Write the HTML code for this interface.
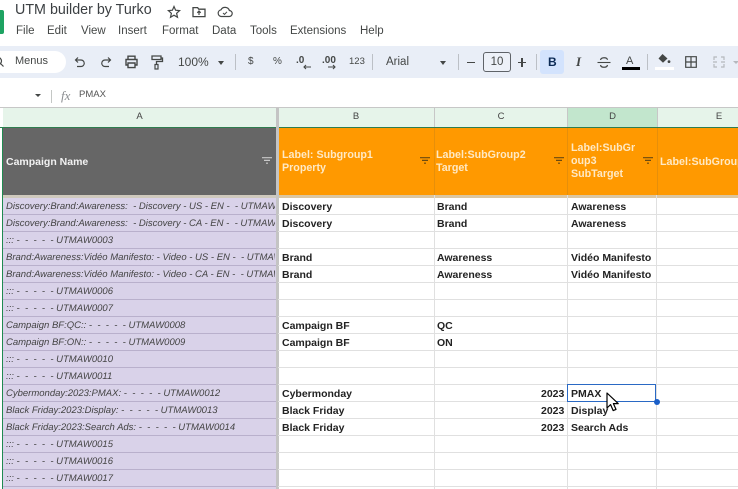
<!DOCTYPE html>
<html><head><meta charset="utf-8"><style>
html,body{margin:0;padding:0;width:738px;height:489px;overflow:hidden;background:#fff;font-family:"Liberation Sans",sans-serif}
#p{position:relative;width:738px;height:489px;overflow:hidden;background:#fff}
#p div{position:absolute;white-space:nowrap}
.m{top:24px;font-size:11.5px;line-height:15px;color:#444746}
.tb{font-size:11px;color:#444746;line-height:14px}
.sep{width:1px;background:#bcc0c6;top:54px;height:16px}
.h{top:108px;height:19px;line-height:17px;font-size:9.5px;color:#444;text-align:center;background:#e6f4ea}
.a{left:6px;width:269px;overflow:hidden;font-style:italic;font-size:9.5px;line-height:16px;height:16px;color:#444;margin-top:1px;text-rendering:geometricPrecision}
.b{font-weight:bold;font-size:10.5px;line-height:16px;height:16px;color:#222}
.l{height:1px;background:#e0e0e0;left:278px;width:460px}
.pl{height:1px;background:#b9b0cc;left:3px;width:273px}
.v{width:1px;background:#e0e0e0;top:195px;height:294px}
.hd{font-weight:bold;font-size:10.7px;line-height:13px;color:#ffe9c4;white-space:normal}
svg{position:absolute;overflow:visible}
</style></head><body><div id="p">

<div style="left:-6px;top:10px;width:10px;height:24px;background:#1ea362;border-radius:2px"></div>
<div style="left:15px;top:0;font-size:14.3px;line-height:20px;color:#3c4043">UTM builder by Turko</div>
<svg style="left:167px;top:5px" width="14" height="14" viewBox="0 0 14 14"><path d="M7 1.5l1.6 3.7 4 .4-3 2.7.9 4L7 10.2l-3.5 2.1.9-4-3-2.7 4-.4z" fill="none" stroke="#444746" stroke-width="1.2"/></svg>
<svg style="left:192px;top:6px" width="14" height="12" viewBox="0 0 14 12"><path d="M1 2.2V10.6H13V3.2H6.8L5.6 1.6H1z" fill="none" stroke="#444746" stroke-width="1.3"/><path d="M7 9V5.2M5.3 6.8L7 5l1.7 1.8" fill="none" stroke="#444746" stroke-width="1.2"/></svg>
<svg style="left:217px;top:6px" width="16" height="12" viewBox="0 0 16 12"><path d="M4 10.5H12a3 3 0 0 0 .4-6A4.6 4.6 0 0 0 4 3.8a3.4 3.4 0 0 0 0 6.7z" fill="none" stroke="#444746" stroke-width="1.2"/><path d="M6 7l1.5 1.4L10 5.8" fill="none" stroke="#444746" stroke-width="1"/></svg>

<div class="m" style="left:16px">File</div>
<div class="m" style="left:47px">Edit</div>
<div class="m" style="left:81px">View</div>
<div class="m" style="left:118px">Insert</div>
<div class="m" style="left:162px">Format</div>
<div class="m" style="left:212px">Data</div>
<div class="m" style="left:250px">Tools</div>
<div class="m" style="left:290px">Extensions</div>
<div class="m" style="left:360px">Help</div>

<div style="left:0;top:46px;width:738px;height:32px;background:#e9eef7"></div>
<div style="left:-20px;top:51px;width:86px;height:22px;background:#fff;border-radius:11px"></div>
<svg style="left:-3px;top:56px" width="9" height="12" viewBox="0 0 9 12"><circle cx="1" cy="5" r="3.5" fill="none" stroke="#444746" stroke-width="1.2"/><path d="M3.5 7.5L6.5 10.5" stroke="#444746" stroke-width="1.2"/></svg>
<div class="tb" style="left:15px;top:54px">Menus</div>
<svg style="left:74px;top:56px" width="12" height="12" viewBox="0 0 12 12"><path d="M4 1.5L1.5 4 4 6.5M1.5 4H7a3.2 3.2 0 0 1 0 6.5H3" fill="none" stroke="#444746" stroke-width="1.2"/></svg>
<svg style="left:100px;top:56px" width="12" height="12" viewBox="0 0 12 12"><path d="M8 1.5L10.5 4 8 6.5M10.5 4H5a3.2 3.2 0 0 0 0 6.5H9" fill="none" stroke="#444746" stroke-width="1.2"/></svg>
<svg style="left:125px;top:55px" width="13" height="14" viewBox="0 0 13 14"><path d="M3 4V1.2H10V4M3 10H1V4.5H12V10H10M3 8H10V12.6H3z" fill="none" stroke="#444746" stroke-width="1.4"/></svg>
<svg style="left:151px;top:55px" width="12" height="15" viewBox="0 0 12 15"><path d="M1 1H10V4.5H1zM10 3H11.5V6.5H5.5V9.5" fill="none" stroke="#444746" stroke-width="1.3"/><rect x="4" y="9.5" width="3" height="4.5" fill="none" stroke="#444746" stroke-width="1.2"/></svg>
<div style="left:178px;top:55px;font-size:12px;line-height:15px;color:#444746">100%</div>
<div style="left:218px;top:61px;width:0;height:0;border:3.5px solid transparent;border-top:4px solid #444746;border-bottom:0"></div>
<div class="sep" style="left:235px"></div>
<div class="tb" style="left:248px;top:55px;font-size:10px">$</div>
<div class="tb" style="left:273px;top:55px;font-size:10px">%</div>
<div style="left:296px;top:54px;font-size:10px;font-weight:bold;color:#444746;line-height:13px">.0</div>
<svg style="left:302px;top:64px" width="10" height="6" viewBox="0 0 10 6"><path d="M9 3H2M4 1L2 3l2 2" fill="none" stroke="#444746" stroke-width="1.1"/></svg>
<div style="left:322px;top:54px;font-size:10px;font-weight:bold;color:#444746;line-height:13px">.00</div>
<svg style="left:327px;top:64px" width="10" height="6" viewBox="0 0 10 6"><path d="M1 3H8M6 1l2 2-2 2" fill="none" stroke="#444746" stroke-width="1.1"/></svg>
<div class="tb" style="left:349px;top:55px;font-size:9.5px">123</div>
<div class="sep" style="left:372px"></div>
<div class="tb" style="left:386px;top:55px;font-size:11.5px">Arial</div>
<div style="left:440px;top:61px;width:0;height:0;border:3.5px solid transparent;border-top:4px solid #444746;border-bottom:0"></div>
<div class="sep" style="left:458px"></div>
<div style="left:467px;top:62px;width:8px;height:1.4px;background:#444746"></div>
<div style="left:483px;top:52px;width:26px;height:18px;border:1px solid #5f6368;border-radius:3px;background:#edf1f8;text-align:center;font-size:11.5px;line-height:18px;color:#444746">10</div>
<div style="left:518px;top:62px;width:8px;height:1.4px;background:#444746"></div>
<div style="left:521.4px;top:58px;width:1.4px;height:9px;background:#444746"></div>
<div class="sep" style="left:536px"></div>
<div style="left:540px;top:50px;width:24px;height:24px;background:#d3e3fd;border-radius:3px"></div>
<div style="left:548px;top:55px;font-size:12px;font-weight:bold;line-height:14px;color:#0b2a55">B</div>
<div style="left:576px;top:54px;font-size:13px;font-style:italic;font-weight:bold;font-family:'Liberation Serif',serif;line-height:15px;color:#444746">I</div>
<svg style="left:597px;top:56px" width="14" height="13" viewBox="0 0 14 13"><path d="M0.5 6.5H13.5" stroke="#444746" stroke-width="1.1"/><path d="M3.5 4C4 1 10 1 10.5 3.8M3.5 9C4 12 10 12 10.5 9" fill="none" stroke="#444746" stroke-width="1.2"/></svg>
<div style="left:626px;top:55px;font-size:11px;line-height:12px;color:#444746">A</div>
<div style="left:622px;top:67px;width:18px;height:3px;background:#000"></div>
<div class="sep" style="left:647px"></div>
<svg style="left:657px;top:53px" width="14" height="12" viewBox="0 0 14 12"><path d="M5.5 1L10.5 5.5 6 9.8 1.5 5.5z" fill="#444746"/><circle cx="12" cy="8.6" r="1.4" fill="#444746"/></svg>
<div style="left:655px;top:67px;width:19px;height:3px;background:#fff"></div>
<svg style="left:685px;top:56px" width="12" height="12" viewBox="0 0 12 12"><path d="M.7.7H11.3V11.3H.7zM6 .7V11.3M.7 6H11.3" fill="none" stroke="#444746" stroke-width="1.2"/></svg>
<svg style="left:713px;top:56px" width="12" height="12" viewBox="0 0 12 12"><path d="M1 4V1H4M8 1H11V4M1 8V11H4M8 11H11V8M0 6H4M8 6H12" fill="none" stroke="#b5b8bd" stroke-width="1.2"/></svg>
<div style="left:733px;top:61px;width:0;height:0;border:3px solid transparent;border-top:3.5px solid #b5b8bd;border-bottom:0"></div>

<div style="left:35px;top:94px;width:0;height:0;border:3.5px solid transparent;border-top:3.5px solid #444746;border-bottom:0"></div>
<div style="left:51px;top:90px;width:1px;height:13px;background:#c4c7c5"></div>
<div style="left:61px;top:88px;font-family:'Liberation Serif',serif;font-style:italic;font-size:13px;line-height:16px;color:#8a8d90">fx</div>
<div style="left:79px;top:88px;font-size:9.5px;line-height:13px;color:#555">PMAX</div>

<div style="left:0;top:107px;width:738px;height:1px;background:#c7c7c7"></div>
<div class="h" style="left:3px;width:273px">A</div>
<div class="h" style="left:278px;width:156px">B</div>
<div class="h" style="left:435px;width:132px">C</div>
<div class="h" style="left:568px;width:89px;background:#c2e6cd">D</div>
<div class="h" style="left:658px;width:122px">E</div>
<div style="left:434px;top:108px;width:1px;height:19px;background:#c7c7c7"></div>
<div style="left:567px;top:108px;width:1px;height:19px;background:#c7c7c7"></div>
<div style="left:657px;top:108px;width:1px;height:19px;background:#c7c7c7"></div>

<div style="left:3px;top:127px;width:273px;height:68px;background:#666"></div>
<div style="left:278px;top:127px;width:460px;height:68px;background:#ff9900"></div>
<div style="left:0;top:127px;width:738px;height:1px;background:#2f7d4f"></div>
<div style="left:3px;top:195px;width:735px;height:3px;background:#cfc9bd"></div>
<div style="left:278px;top:195px;width:460px;height:3px;background:#dcc6a0"></div>
<div style="left:434px;top:128px;width:1px;height:67px;background:#e68f0a"></div>
<div style="left:567px;top:128px;width:1px;height:67px;background:#e68f0a"></div>
<div style="left:657px;top:128px;width:1px;height:67px;background:#e68f0a"></div>

<div class="hd" style="left:6px;top:155px;color:#f2f2f2;white-space:nowrap;font-size:10.5px;line-height:14px">Campaign Name</div>
<div class="hd" style="left:282px;top:148px;width:130px;line-height:13px;padding-top:1px">Label: Subgroup1<br>Property</div>
<div class="hd" style="left:436px;top:149px;width:120px">Label:SubGroup2<br>Target</div>
<div class="hd" style="left:571px;top:142px;width:70px">Label:SubGr<br>oup3<br>SubTarget</div>
<div class="hd" style="left:660px;top:156px;white-space:nowrap">Label:SubGroup</div>

<svg style="left:262px;top:157px" width="10" height="7" viewBox="0 0 10 7"><path d="M0 .7H10M2 3.4H8M4 6.2H6" stroke="#c9c9c9" stroke-width="1.2"/></svg>
<svg style="left:420px;top:157px" width="10" height="7" viewBox="0 0 10 7"><path d="M0 .7H10M2 3.4H8M4 6.2H6" stroke="#6b4a10" stroke-width="1.2"/></svg>
<svg style="left:554px;top:157px" width="10" height="7" viewBox="0 0 10 7"><path d="M0 .7H10M2 3.4H8M4 6.2H6" stroke="#6b4a10" stroke-width="1.2"/></svg>
<svg style="left:643px;top:157px" width="10" height="7" viewBox="0 0 10 7"><path d="M0 .7H10M2 3.4H8M4 6.2H6" stroke="#6b4a10" stroke-width="1.2"/></svg>

<div style="left:3px;top:198px;width:273px;height:291px;background:#d9d2e9"></div>
<div style="left:2px;top:127px;width:1px;height:362px;background:#1f8a50"></div>
<div style="left:275.5px;top:108px;width:3px;height:381px;background:#c4c4c4"></div>

<div class="v" style="left:434px"></div>
<div class="v" style="left:567px"></div>
<div class="v" style="left:656px"></div>

<div class="pl" style="top:214px"></div><div class="pl" style="top:231px"></div><div class="pl" style="top:248px"></div><div class="pl" style="top:265px"></div><div class="pl" style="top:282px"></div><div class="pl" style="top:299px"></div><div class="pl" style="top:316px"></div><div class="pl" style="top:333px"></div><div class="pl" style="top:350px"></div><div class="pl" style="top:367px"></div><div class="pl" style="top:384px"></div><div class="pl" style="top:401px"></div><div class="pl" style="top:418px"></div><div class="pl" style="top:435px"></div><div class="pl" style="top:452px"></div><div class="pl" style="top:469px"></div><div class="pl" style="top:486px"></div>
<div class="l" style="top:214px"></div><div class="l" style="top:231px"></div><div class="l" style="top:248px"></div><div class="l" style="top:265px"></div><div class="l" style="top:282px"></div><div class="l" style="top:299px"></div><div class="l" style="top:316px"></div><div class="l" style="top:333px"></div><div class="l" style="top:350px"></div><div class="l" style="top:367px"></div><div class="l" style="top:384px"></div><div class="l" style="top:401px"></div><div class="l" style="top:418px"></div><div class="l" style="top:435px"></div><div class="l" style="top:452px"></div><div class="l" style="top:469px"></div><div class="l" style="top:486px"></div>

<div class="a" style="top:198px">Discovery:Brand:Awareness: &nbsp;- Discovery - US - EN - &nbsp;- UTMAW0001</div>
<div class="a" style="top:215px">Discovery:Brand:Awareness: &nbsp;- Discovery - CA - EN - &nbsp;- UTMAW0002</div>
<div class="a" style="top:232px">::: -&nbsp; -&nbsp; -&nbsp; -&nbsp; - UTMAW0003</div>
<div class="a" style="top:249px">Brand:Awareness:Vidéo Manifesto: - Video - US - EN - &nbsp;- UTMAW0004</div>
<div class="a" style="top:266px">Brand:Awareness:Vidéo Manifesto: - Video - CA - EN - &nbsp;- UTMAW0005</div>
<div class="a" style="top:283px">::: -&nbsp; -&nbsp; -&nbsp; -&nbsp; - UTMAW0006</div>
<div class="a" style="top:300px">::: -&nbsp; -&nbsp; -&nbsp; -&nbsp; - UTMAW0007</div>
<div class="a" style="top:317px">Campaign BF:QC:: -&nbsp; -&nbsp; -&nbsp; -&nbsp; - UTMAW0008</div>
<div class="a" style="top:334px">Campaign BF:ON:: -&nbsp; -&nbsp; -&nbsp; -&nbsp; - UTMAW0009</div>
<div class="a" style="top:351px">::: -&nbsp; -&nbsp; -&nbsp; -&nbsp; - UTMAW0010</div>
<div class="a" style="top:368px">::: -&nbsp; -&nbsp; -&nbsp; -&nbsp; - UTMAW0011</div>
<div class="a" style="top:385px">Cybermonday:2023:PMAX: -&nbsp; -&nbsp; -&nbsp; -&nbsp; - UTMAW0012</div>
<div class="a" style="top:402px">Black Friday:2023:Display: -&nbsp; -&nbsp; -&nbsp; -&nbsp; - UTMAW0013</div>
<div class="a" style="top:419px">Black Friday:2023:Search Ads: -&nbsp; -&nbsp; -&nbsp; -&nbsp; - UTMAW0014</div>
<div class="a" style="top:436px">::: -&nbsp; -&nbsp; -&nbsp; -&nbsp; - UTMAW0015</div>
<div class="a" style="top:453px">::: -&nbsp; -&nbsp; -&nbsp; -&nbsp; - UTMAW0016</div>
<div class="a" style="top:470px">::: -&nbsp; -&nbsp; -&nbsp; -&nbsp; - UTMAW0017</div>

<div class="b" style="left:282px;top:199px">Discovery</div><div class="b" style="left:437px;top:199px">Brand</div><div class="b" style="left:571px;top:199px">Awareness</div>
<div class="b" style="left:282px;top:216px">Discovery</div><div class="b" style="left:437px;top:216px">Brand</div><div class="b" style="left:571px;top:216px">Awareness</div>
<div class="b" style="left:282px;top:250px">Brand</div><div class="b" style="left:437px;top:250px">Awareness</div><div class="b" style="left:571px;top:250px">Vidéo Manifesto</div>
<div class="b" style="left:282px;top:267px">Brand</div><div class="b" style="left:437px;top:267px">Awareness</div><div class="b" style="left:571px;top:267px">Vidéo Manifesto</div>
<div class="b" style="left:282px;top:318px">Campaign BF</div><div class="b" style="left:437px;top:318px">QC</div>
<div class="b" style="left:282px;top:335px">Campaign BF</div><div class="b" style="left:437px;top:335px">ON</div>
<div class="b" style="left:282px;top:386px">Cybermonday</div><div class="b" style="left:541px;top:386px">2023</div><div class="b" style="left:571px;top:386px">PMAX</div>
<div class="b" style="left:282px;top:403px">Black Friday</div><div class="b" style="left:541px;top:403px">2023</div><div class="b" style="left:571px;top:403px">Display</div>
<div class="b" style="left:282px;top:420px">Black Friday</div><div class="b" style="left:541px;top:420px">2023</div><div class="b" style="left:571px;top:420px">Search Ads</div>

<div style="left:567px;top:384px;width:87px;height:16px;border:1px solid #2a69c4"></div>
<div style="left:654px;top:399px;width:6px;height:6px;border-radius:50%;background:#1a5fc8"></div>
<svg style="left:606px;top:392px" width="13" height="21" viewBox="0 0 13 21"><path d="M1 1V16L4.6 12.6 7.2 18.6 10 17.4 7.4 11.6H12.2z" fill="#fff" stroke="#000" stroke-width="1.2" stroke-linejoin="round"/></svg>
</div></body></html>
